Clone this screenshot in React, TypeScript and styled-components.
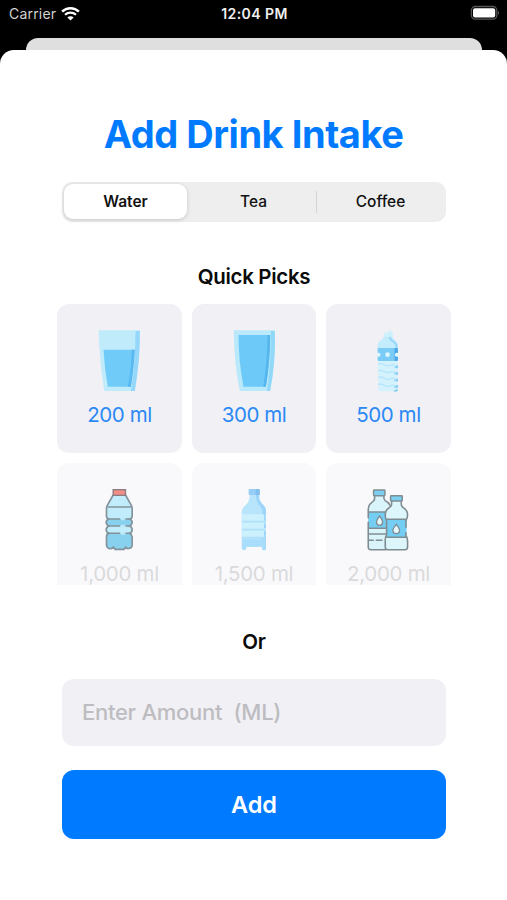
import React, { useState } from "react";
import styled, { createGlobalStyle } from "styled-components";

const GlobalStyle = createGlobalStyle`
  * { box-sizing: border-box; }
  body { margin: 0; background: #000; font-family: Inter, "Liberation Sans", sans-serif; }
  button, input { font-family: inherit; border: 0; padding: 0; margin: 0; }
`;

const Screen = styled.div`
  width: 507px;
  height: 900px;
  background: #000;
  display: flex;
  flex-direction: column;
  overflow: hidden;
`;

const StatusBar = styled.header`
  height: 38px;
  flex: none;
  padding: 4px 7px 0 9px;
  display: grid;
  grid-template-columns: 1fr auto 1fr;
  align-items: start;
  line-height: 20px;
  font-size: 14px;
`;

const Carrier = styled.div`
  display: flex;
  align-items: center;
  gap: 5px;
  height: 19px;
  color: #d2d2d2;
  letter-spacing: 0.2px;
`;

const Clock = styled.div`
  color: #f0f0f0;
  font-weight: 600;
  letter-spacing: 0.42px;
`;

const BatterySlot = styled.div`
  display: flex;
  justify-content: flex-end;
`;

const BackSheet = styled.div`
  height: 12px;
  flex: none;
  margin: 0 25px 0 26px;
  border-radius: 12px 12px 0 0;
  background: #dfdfdf;
`;

const Sheet = styled.main`
  flex: 1;
  background: #fff;
  border-radius: 14px 14px 0 0;
  display: flex;
  flex-direction: column;
  align-items: center;
  padding: 59px 0 0 1px;
`;

const Title = styled.h1`
  margin: 0 1px 0 0;
  color: #007aff;
  font-size: 38px;
  line-height: 50px;
  font-weight: 700;
  letter-spacing: -0.45px;
  white-space: nowrap;
`;

const Segments = styled.div`
  width: 384px;
  height: 40px;
  margin-top: 23px;
  padding: 2px;
  display: grid;
  grid-template-columns: 123px 4px 1fr 1px 127px;
  align-items: center;
  border-radius: 10px;
  background: #eee;
`;

const Segment = styled.button<{ $selected: boolean }>`
  height: 35px;
  align-self: start;
  padding-top: 1px;
  border-radius: 9px;
  background: ${(p) => (p.$selected ? "#fff" : "transparent")};
  box-shadow: ${(p) => (p.$selected ? "0 1px 4px rgba(0, 0, 0, 0.17)" : "none")};
  color: #111;
  font-size: 15.5px;
  line-height: 34px;
  font-weight: ${(p) => (p.$selected ? 600 : 500)};
`;

const Separator = styled.span<{ $visible?: boolean }>`
  height: 22px;
  background: ${(p) => (p.$visible ? "#d5d5d7" : "transparent")};
`;

const Heading = styled.h2<{ $top: number }>`
  margin: ${(p) => p.$top}px 0 0;
  color: #0a0a0a;
  font-size: 20.5px;
  line-height: 26px;
  font-weight: 600;
  letter-spacing: -0.32px;
`;

const Picks = styled.div`
  height: 281px;
  flex: none;
  margin-top: 14px;
  display: grid;
  grid-template-columns: repeat(3, 124.5px);
  grid-auto-rows: 148.5px;
  gap: 10px;
  overflow: hidden;
`;

const Pick = styled.button<{ $faded: boolean }>`
  display: flex;
  flex-direction: column;
  align-items: center;
  justify-content: flex-start;
  padding-top: 26px;
  border-radius: 12px;
  background: ${(p) => (p.$faded ? "#f9f9fb" : "#f1f0f5")};
  color: ${(p) => (p.$faded ? "#dadadc" : "#2a89f5")};
  font-size: 20.5px;
  line-height: 26px;
  letter-spacing: ${(p) => (p.$faded ? -0.3 : -0.45)}px;
`;

const Art = styled.svg`
  width: 62px;
  height: 62px;
  flex: none;
  margin: 0 1px 10px 0;
`;

const Amount = styled.input`
  width: 384px;
  height: 67px;
  flex: none;
  margin-top: 24px;
  padding: 0 20px 1px;
  border-radius: 12px;
  background: #f1f0f5;
  font-size: 22px;
  font-weight: 500;
  letter-spacing: -0.27px;
  outline: none;
  &::placeholder { color: #bdbdc1; opacity: 1; }
`;

const AddButton = styled.button`
  width: 384px;
  height: 69px;
  flex: none;
  margin-top: 24px;
  border-radius: 12px;
  background: #007aff;
  color: #fff;
  font-size: 23.5px;
  font-weight: 600;
`;

const WifiIcon = () => (
  <svg width="19" height="14" viewBox="0 0.5 19 14" fill="none" stroke="#fff">
    <path d="M1.1 5.2A12 12 0 0 1 17.9 5.2" strokeWidth="2.5" />
    <path d="M4 8.3A8 8 0 0 1 15 8.3" strokeWidth="2.2" />
    <path d="M9.5 14 6.4 11A4.3 4.3 0 0 1 12.6 11Z" fill="#fff" stroke="none" />
  </svg>
);

const BatteryIcon = () => (
  <svg width="30" height="16" viewBox="0 0 30 16">
    <rect x="1.4" y="2.5" width="25.4" height="12.6" rx="3.8" fill="#000" stroke="#555" strokeWidth="1.3" />
    <rect x="3" y="4.2" width="22.2" height="9.2" rx="2" fill="#fff" />
    <path d="M28.2 6.8Q30 8.8 28.2 11Z" fill="#777" />
  </svg>
);

const SmallGlass = () => (
  <Art viewBox="115.5 90 186 186">
    <path d="M147 91H271L269 166 256 273H164Q151 190 147 91Z" fill="#c0ebfa" />
    <path d="M258 93H271Q272 180 256 273H244Q258 190 258 93Z" fill="#94d7fa" />
    <path d="M162 149H256L244 260H175Q165 207 162 149Z" fill="#71cbf9" />
    <path d="M247 149H256Q253 209 244 260H235Q245 210 247 149Z" fill="#5bb9f2" />
  </Art>
);

const LargeGlass = () => (
  <Art viewBox="115.5 90 186 186">
    <path d="M148 91H271Q274 180 257 273H166Q148 190 148 91Z" fill="#b9e9fb" />
    <path d="M259 93H271Q274 180 257 273H247Q260 190 259 93Z" fill="#92d8f8" />
    <path d="M162 105H257Q257 184 244 260H177Q162 184 162 105Z" fill="#6dcaf8" />
    <path d="M249 105H257Q257 184 244 260H236Q249 184 249 105Z" fill="#55b6ed" />
  </Art>
);

const HalfLitreBottle = () => (
  <Art viewBox="-21.75 24 186 186">
    <path d="M58 35Q58 32 61 32H73V26Q77 22 81 26V31Q86 32 86 36V45H58Z" fill="#cdf0fd" />
    <path d="M58 44H84Q86 52 94 56Q101 61 101 69V79H40V69Q40 60 49 55Q57 51 58 44Z" fill="#c3ecfc" />
    <path d="M75 46Q80 55 89 60Q96 65 97 74V79" fill="none" stroke="#98d5f8" strokeWidth="6" />
    <path d="M40 82Q40 78 44 78H97Q101 78 101 82V92Q92 98 101 104V113Q101 117 97 117H44Q40 117 40 113V104Q49 98 40 92Z" fill="#7accf7" />
    <path d="M91 78H97Q101 78 101 82V92Q92 98 101 104V113Q101 117 97 117H91Z" fill="#4ba8e8" />
    <circle cx="70" cy="98" r="7" fill="#def6ff" />
    <circle cx="43" cy="98" r="6" fill="#def6ff" />
    <circle cx="98" cy="98" r="6" fill="#e2f8ff" />
    <path d="M42 117H99L101 124 97 132 101 142 97 150 101 160 97 168 101 178 97 187 101 196 98 208H42L44 197 40 190 44 180 40 172 44 161 40 153 44 143 40 135 44 126Z" fill="#d3f2fd" />
    <path d="M42 126Q51 123 60 129T80 129H92M42 146Q51 143 60 149T80 149H92M42 166Q51 163 60 169T80 169H92M42 187Q51 184 60 190T80 190H92" fill="none" stroke="#b6e5fb" strokeWidth="4" />
    <path d="M91 136 100 130V138ZM90 155 100 150V158ZM90 175 100 170V178ZM90 195 100 189V197ZM89 208 99 202V207Z" fill="#82cbf3" stroke="#82cbf3" strokeWidth="2" />
  </Art>
);

const LitreBottle = () => (
  <Art viewBox="-4.5 27 186 186">
    <path d="M72 45 52 79V202Q55 209 69 207 77 206 90 209 101 206 114 207 126 209 127 196V79L107 45Z" fill="#c0ecfb" />
    <path d="M52 117H127V138H52ZM52 160H127V196Q126 209 113 207L90 208 67 207 52 202Z" fill="#88d1ee" />
    <path d="M71 45 53 77Q51 80 51 87V108Q51 116 58 117Q50 120 50 127T58 138Q50 142 50 149T58 160Q51 162 51 171V195Q52 207 65 206Q69 206 71 201Q76 205 76 208H104L108 201Q111 206 115 206Q128 205 128 195V171Q127 163 120 160Q128 157 128 149T120 138Q128 134 128 127T120 117Q128 116 128 108V87Q128 80 126 77L108 45" fill="none" stroke="#84939a" strokeWidth="5" strokeLinejoin="round" />
    <path d="M54 81H126M58 117H92M108 117H120M58 138H92M108 138H120M58 160H92M108 160H120" stroke="#84939a" strokeWidth="4.5" />
    <path d="M94 113H106V121H94ZM94 134H106V142H94ZM94 156H106V164H94Z" fill="#bce9f7" />
    <rect x="71" y="29" width="37" height="17" fill="#f28c86" stroke="#8b7c81" strokeWidth="4" />
  </Art>
);

const LargeBottle = () => (
  <Art viewBox="-21 27 186 186">
    <path d="M59 44H87V57Q91 69 102 77Q108 83 108 94V206Q105 214 97 209V200H48V208L40 211 35 206V96Q36 82 48 74Q59 64 59 44Z" fill="#b8e5fb" />
    <path d="M78 44H88V57Q93 70 102 77Q109 84 108 96V208Q103 212 97 208V96Q97 84 88 76Q78 67 78 44Z" fill="#9dd5fb" />
    <path d="M36 103H104Q111 111 104 121Q111 131 104 140Q111 150 104 160Q111 168 104 173H36Z" fill="#cdf0fd" />
    <path d="M36 125H105M36 149H105M36 173H105" stroke="#addff9" strokeWidth="5" />
    <path d="M104 100V121M104 129V144M104 152V170" stroke="#9dd5fb" strokeWidth="4" />
    <path d="M36 178H106V208H98V200H49V207L41 211 36 206Z" fill="#a8defb" />
    <rect x="56" y="27" width="33" height="18" rx="3" fill="#97cef5" />
    <path d="M77 27H86Q89 27 89 30V45H77Z" fill="#82bfef" />
  </Art>
);

const BottlePair = () => (
  <Art viewBox="23.25 27 186 186">
    <path d="M76 47V57Q75 63 68 67Q57 74 57 90V202Q57 209 65 209H110V82Q119 80 122 76Q118 68 110 66Q104 62 104 55V47Z" fill="#d9f5fb" />
    <path d="M57 96H114V145H57Z" fill="#74cdf2" />
    <path d="M76 47V57Q75 63 68 67Q57 74 57 90V113M57 127V201Q57 209 65 209H110M104 47V55Q106 63 114 66Q120 69 122 76M57 96H115M57 145H108M57 162H108M57 181H72M81 181H98" fill="none" stroke="#7f8d92" strokeWidth="4.7" strokeLinecap="round" />
    <rect x="73" y="30" width="34" height="17" rx="2" fill="#7bcff2" stroke="#7f8d92" strokeWidth="4.5" />
    <path d="M91 108Q81 121 82 128Q83 136 91 136T100 128Q101 121 91 108Z" fill="#e5f9fe" stroke="#7f8d92" strokeWidth="3.8" />
    <path d="M127 63V73Q127 80 118 84Q108 91 108 106Q108 115 112 122V166L108 180V201Q108 209 116 209H167Q175 209 175 200V178L170 166V122Q175 113 175 105Q175 92 165 85Q156 80 156 73V63Z" fill="#dcf6fc" />
    <path d="M111 118H172V171H111Z" fill="#74cdf2" />
    <path d="M127 63V73Q127 80 118 84Q108 91 108 106Q108 115 112 122V164Q107 174 108 183V201Q108 209 116 209H167Q175 209 175 200V183Q175 174 170 166V158M170 142V122Q175 113 175 105Q175 92 165 85Q156 80 156 73V63M112 118H170M110 172H173" fill="none" stroke="#7f8d92" strokeWidth="4.7" strokeLinejoin="round" strokeLinecap="round" />
    <rect x="124" y="47" width="35" height="16" rx="2" fill="#7bcff2" stroke="#7f8d92" strokeWidth="4.5" />
    <path d="M141 133Q130 147 131 153Q132 161 141 161T151 153Q152 147 141 133Z" fill="#e5f9fe" stroke="#7f8d92" strokeWidth="3.8" />
  </Art>
);

const picks = [
  { label: "200 ml", Icon: SmallGlass, faded: false },
  { label: "300 ml", Icon: LargeGlass, faded: false },
  { label: "500 ml", Icon: HalfLitreBottle, faded: false },
  { label: "1,000 ml", Icon: LitreBottle, faded: true },
  { label: "1,500 ml", Icon: LargeBottle, faded: true },
  { label: "2,000 ml", Icon: BottlePair, faded: true },
];

export default function App() {
  const [drink, setDrink] = useState("Water");
  const [amount, setAmount] = useState("");
  return (
    <Screen>
      <GlobalStyle />
      <StatusBar>
        <Carrier>
          Carrier
          <WifiIcon />
        </Carrier>
        <Clock>12:04 PM</Clock>
        <BatterySlot>
          <BatteryIcon />
        </BatterySlot>
      </StatusBar>
      <BackSheet />
      <Sheet>
        <Title>Add Drink Intake</Title>
        <Segments>
          <Segment $selected={drink === "Water"} onClick={() => setDrink("Water")}>Water</Segment>
          <Separator />
          <Segment $selected={drink === "Tea"} onClick={() => setDrink("Tea")}>Tea</Segment>
          <Separator $visible />
          <Segment $selected={drink === "Coffee"} onClick={() => setDrink("Coffee")}>Coffee</Segment>
        </Segments>
        <Heading $top={42}>Quick Picks</Heading>
        <Picks>
          {picks.map(({ label, Icon, faded }) => (
            <Pick key={label} $faded={faded}>
              <Icon />
              {label}
            </Pick>
          ))}
        </Picks>
        <Heading $top={44}>Or</Heading>
        <Amount
          placeholder={"Enter Amount\u00a0 (ML)"}
          value={amount}
          onChange={(e) => setAmount(e.target.value)}
        />
        <AddButton>Add</AddButton>
      </Sheet>
    </Screen>
  );
}
